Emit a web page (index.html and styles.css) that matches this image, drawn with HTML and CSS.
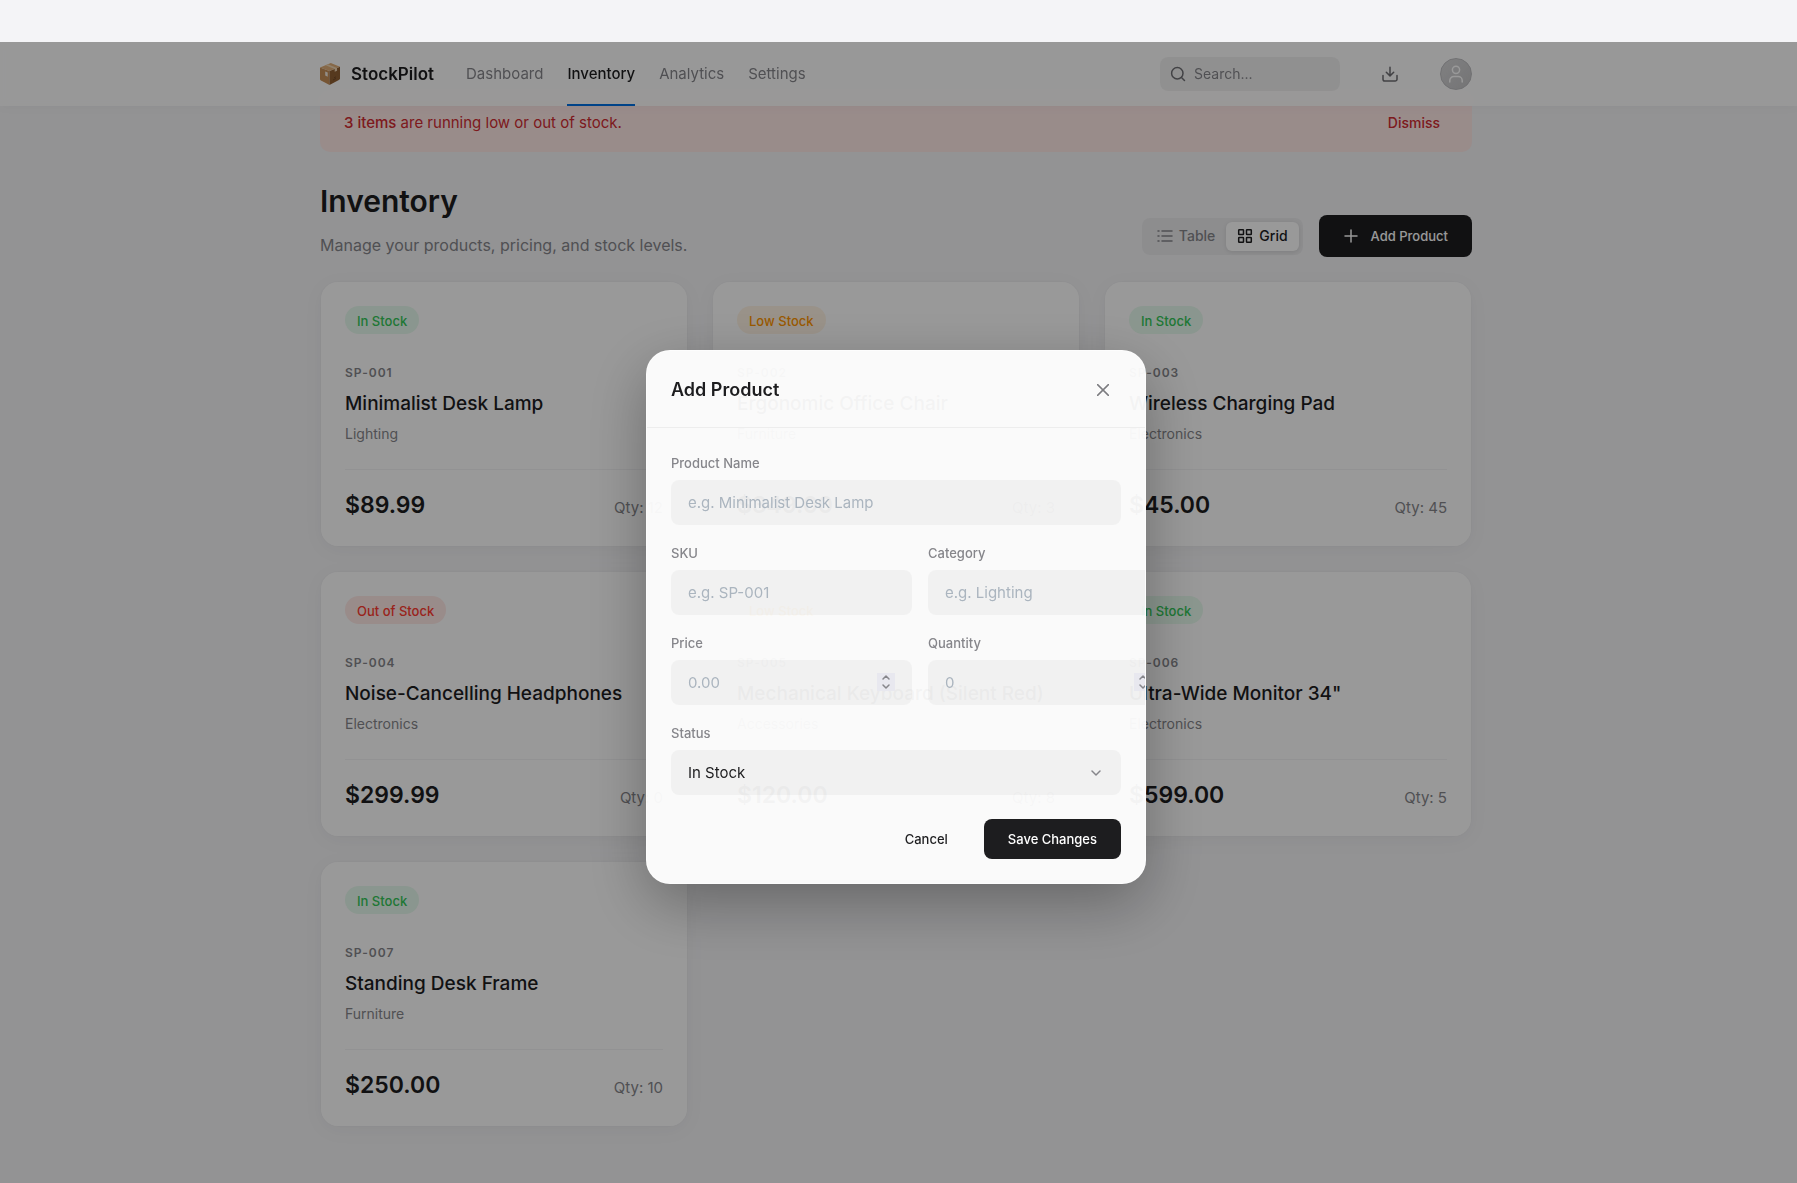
FILE: index.html
```html
<!DOCTYPE html>
<html lang="en">
<head>
<meta charset="utf-8">
<meta name="viewport" content="width=device-width, initial-scale=1">
<title>StockPilot – Inventory</title>
<link rel="stylesheet" href="styles.css">
</head>
<body>
<div class="app">
  <header class="topbar">
    <div class="container topbar-inner">
      <a class="brand" href="#">
        <svg class="brand-icon" viewBox="0 0 20 22" aria-hidden="true">
          <path d="M0 4.5 9.5 8v14L1 17.6Q0 17 0 16z" fill="#c58e58"/>
          <path d="M20 3.8 9.5 8v14l9.400-5.100q1.100-.6 1.100-1.600z" fill="#8f5f33"/>
          <path d="M0 4.500 10.800 0 20 3.800 9.500 8z" fill="#dfae78"/>
          <path d="m5.600 2.200 2.200-1L17 5l.1 2.800-2.400 1V6z" fill="#f0d6b4"/>
          <path d="m5.200 8.600 2.500 1v4.200l-2.500-1.300z" fill="#f3ece2"/>
          <path d="m13 17 3-1.600M14 14.800l2-1" stroke="#6b4423" stroke-width=".8"/>
        </svg>
        <span>StockPilot</span>
      </a>
      <nav class="nav">
        <a href="#">Dashboard</a>
        <a class="active" href="#">Inventory</a>
        <a href="#">Analytics</a>
        <a href="#">Settings</a>
      </nav>
      <div class="tools">
        <label class="search">
          <svg class="icon" viewBox="0 0 16 16" aria-hidden="true"><circle cx="7.300" cy="7.300" r="5.700"/><path d="m11.500 11.500 3 3"/></svg>
          <input type="search" placeholder="Search..." aria-label="Search">
        </label>
        <button class="icon-button" type="button" aria-label="Export">
          <svg class="icon" viewBox="0 0 16 16" aria-hidden="true"><path d="M8 1.200v8.600M4.300 6.200 8 9.900l3.700-3.700M1 9.600v3.600a1.800 1.800 0 0 0 1.800 1.800h10.400a1.800 1.800 0 0 0 1.800-1.800V9.600"/></svg>
        </button>
        <button class="avatar" type="button" aria-label="Account">
          <svg class="icon" viewBox="0 0 16 18" aria-hidden="true"><circle cx="8" cy="4.800" r="3.600"/><path d="M1.800 17v-1.500a4 4 0 0 1 4-4h4.400a4 4 0 0 1 4 4V17"/></svg>
        </button>
      </div>
    </div>
  </header>

  <main class="content">
    <div class="container">
      <div class="alert">
        <p><strong>3 items</strong> are running low or out of stock.</p>
        <button type="button">Dismiss</button>
      </div>

      <div class="page-head">
        <div>
          <h1>Inventory</h1>
          <p class="subtitle">Manage your products, pricing, and stock levels.</p>
        </div>
        <div class="actions">
          <div class="toggle">
            <button type="button">
              <svg class="icon" viewBox="0 0 16 16" aria-hidden="true"><path d="M5 3h10M5 8h10M5 13h10M1 3h1M1 8h1M1 13h1"/></svg>Table
            </button>
            <button class="on" type="button">
              <svg class="icon" viewBox="0 0 16 16" aria-hidden="true"><rect x="1.700" y="1.700" width="4.800" height="4.800" rx=".6"/><rect x="9.500" y="1.700" width="4.800" height="4.800" rx=".6"/><rect x="1.700" y="9.500" width="4.800" height="4.800" rx=".6"/><rect x="9.500" y="9.500" width="4.800" height="4.800" rx=".6"/></svg>Grid
            </button>
          </div>
          <button class="primary add" type="button">
            <svg class="icon" viewBox="0 0 16 16" aria-hidden="true"><path d="M8 2v12M2 8h12"/></svg>Add Product
          </button>
        </div>
      </div>

      <div class="grid">
        <article class="card">
          <span class="badge in">In Stock</span>
          <div class="sku">SP-001</div><h2>Minimalist Desk Lamp</h2><p class="category">Lighting</p>
          <div class="card-foot"><span class="price">$89.99</span><span class="qty">Qty: 12</span></div>
        </article>
        <article class="card">
          <span class="badge low">Low Stock</span>
          <div class="sku">SP-002</div><h2>Ergonomic Office Chair</h2><p class="category">Furniture</p>
          <div class="card-foot"><span class="price">$349.00</span><span class="qty">Qty: 3</span></div>
        </article>
        <article class="card">
          <span class="badge in">In Stock</span>
          <div class="sku">SP-003</div><h2>Wireless Charging Pad</h2><p class="category">Electronics</p>
          <div class="card-foot"><span class="price">$45.00</span><span class="qty">Qty: 45</span></div>
        </article>
        <article class="card">
          <span class="badge out">Out of Stock</span>
          <div class="sku">SP-004</div><h2>Noise-Cancelling Headphones</h2><p class="category">Electronics</p>
          <div class="card-foot"><span class="price">$299.99</span><span class="qty">Qty: 0</span></div>
        </article>
        <article class="card">
          <span class="badge low">Low Stock</span>
          <div class="sku">SP-005</div><h2>Mechanical Keyboard (Silent Red)</h2><p class="category">Accessories</p>
          <div class="card-foot"><span class="price">$120.00</span><span class="qty">Qty: 8</span></div>
        </article>
        <article class="card">
          <span class="badge in">In Stock</span>
          <div class="sku">SP-006</div><h2>Ultra-Wide Monitor 34"</h2><p class="category">Electronics</p>
          <div class="card-foot"><span class="price">$599.00</span><span class="qty">Qty: 5</span></div>
        </article>
        <article class="card">
          <span class="badge in">In Stock</span>
          <div class="sku">SP-007</div><h2>Standing Desk Frame</h2><p class="category">Furniture</p>
          <div class="card-foot"><span class="price">$250.00</span><span class="qty">Qty: 10</span></div>
        </article>
      </div>
    </div>
  </main>

  <div class="overlay">
    <div class="modal" role="dialog" aria-modal="true" aria-labelledby="modal-title">
      <div class="modal-head">
        <h2 id="modal-title">Add Product</h2>
        <button type="button" class="close" aria-label="Close">
          <svg class="icon" viewBox="0 0 12 12" aria-hidden="true"><path d="m.6.6 10.800 10.800M11.400.6.6 11.400"/></svg>
        </button>
      </div>
      <form class="form">
        <div class="field">
          <label for="name">Product Name</label>
          <input id="name" type="text" placeholder="e.g. Minimalist Desk Lamp">
        </div>
        <div class="pair">
          <div class="field">
            <label for="sku">SKU</label>
            <input id="sku" type="text" placeholder="e.g. SP-001">
          </div>
          <div class="field">
            <label for="category">Category</label>
            <input id="category" type="text" placeholder="e.g. Lighting">
          </div>
        </div>
        <div class="pair">
          <div class="field">
            <label for="price">Price</label>
            <input id="price" type="number" placeholder="0.00">
          </div>
          <div class="field">
            <label for="quantity">Quantity</label>
            <input id="quantity" type="number" placeholder="0">
          </div>
        </div>
        <div class="field">
          <label for="status">Status</label>
          <select id="status"><option>In Stock</option><option>Low Stock</option><option>Out of Stock</option></select>
        </div>
        <div class="form-actions">
          <button class="ghost" type="button">Cancel</button>
          <button class="primary" type="submit">Save Changes</button>
        </div>
      </form>
    </div>
  </div>
</div>
</body>
</html>
```
FILE: styles.css
```css
* { box-sizing: border-box; }

html { height: 100%; }

body {
  margin: 0;
  min-height: 100%;
  padding-top: 42px;
  display: flex;
  background: #f4f4f7;
  color: #1d1d1f;
  font-family: Inter, "Liberation Sans", sans-serif;
  font-size: 14px;
  line-height: 20px;
}

h1, h2, p { margin: 0; }
a { color: inherit; text-decoration: none; }
button, input, select { font: inherit; color: inherit; }
button { border: 0; background: none; padding: 0; display: flex; align-items: center; justify-content: center; }

.icon {
  width: 16px;
  height: 16px;
  flex: none;
  fill: none;
  stroke: currentColor;
  stroke-width: 1.500;
  stroke-linecap: round;
  stroke-linejoin: round;
}

.app {
  position: relative;
  flex: 1;
  min-width: 0;
  background: #f5f5f7;
  overflow: hidden;
}

.container { max-width: 1152px; margin: 0 auto; }

/* Top bar, laid over the scrolled content */
.topbar {
  position: absolute;
  inset: 0 0 auto;
  z-index: 2;
  height: 64px;
  padding: 0 5px 0 0;
  background: rgba(255, 255, 255, .88);
  -webkit-backdrop-filter: blur(4px);
  backdrop-filter: blur(4px);
  box-shadow: 0 4px 8px rgba(0, 0, 0, .02);
}
.topbar-inner { height: 100%; display: flex; align-items: center; }
.brand { display: flex; align-items: center; gap: 11px; margin-right: 32px; font-size: 17px; font-weight: 600; }
.brand-icon { width: 20px; height: 22px; }
.nav { align-self: stretch; display: flex; gap: 24px; color: #86868b; font-size: 15px; }
.nav a { display: flex; align-items: center; border-bottom: 2px solid transparent; border-top: 2px solid transparent; }
.nav .active { color: #1d1d1f; font-weight: 500; border-bottom-color: #0071e3; }
.tools { margin-left: auto; display: flex; align-items: center; gap: 34px; color: #6e6e73; }
.search {
  width: 180px;
  height: 34px;
  padding: 0 10px;
  display: flex;
  align-items: center;
  gap: 8px;
  border-radius: 8px;
  background: rgba(0, 0, 0, .05);
}
.search input { min-width: 0; width: 100%; padding: 0; border: 0; outline: 0; background: none; }
.search input::placeholder { color: #86868b; opacity: 1; }
.icon-button { width: 32px; height: 32px; }
.avatar {
  width: 32px;
  height: 32px;
  border-radius: 50%;
  border: 1px solid #bcbcbf;
  background: linear-gradient(135deg, #d6d6d8, #c2c2c4);
  color: #fff;
}
.avatar .icon { height: 18px; }

.content { padding: 50px 5px 40px 0; }

.alert {
  height: 60px;
  padding: 2px 32px 0 24px;
  display: flex;
  align-items: center;
  justify-content: space-between;
  border-radius: 10px;
  background: #ffe9e7;
  color: #d12c32;
  font-size: 15px;
}
.alert strong { font-weight: 500; }
.alert button { font-size: 14px; font-weight: 500; }

.page-head { display: flex; align-items: flex-end; justify-content: space-between; padding: 27px 0 24px; }
h1 { font-size: 30px; line-height: 44px; font-weight: 600; }
.subtitle { margin-top: 11px; font-size: 16px; line-height: 23px; color: #86868b; }
.actions { display: flex; align-items: center; gap: 16px; }
.toggle { display: flex; padding: 4px; border-radius: 8px; background: rgba(0, 0, 0, .04); color: #86868b; font-weight: 500; }
.toggle button { height: 29px; padding: 0 11px; gap: 6px; border-radius: 6px; }
.toggle .on { background: #fff; color: #1d1d1f; box-shadow: 0 1px 4px rgba(0, 0, 0, .1); }
.primary { background: #1d1d1f; color: #fff; border-radius: 8px; font-size: 13px; font-weight: 500; height: 40px; padding: 0 24px; }
.add { height: 42px; gap: 12px; }

.grid { display: grid; grid-template-columns: repeat(3, minmax(0, 1fr)); gap: 24px; }
.card {
  padding: 24px;
  border: 1px solid rgba(0, 0, 0, .01);
  border-radius: 18px;
  background: #fff;
  background-clip: padding-box;
  box-shadow: 0 4px 20px rgba(0, 0, 0, .04);
}
.badge { display: inline-block; height: 28px; padding: 1px 12px 0; border-radius: 14px; font-size: 13px; line-height: 28px; font-weight: 500; vertical-align: top; }
.in { background: #e7fbee; color: #34c759; }
.low { background: #fff4e5; color: #ff9500; }
.out { background: #ffe9e7; color: #ff3b30; }
.sku { margin-top: 30px; font-size: 12px; line-height: 18px; font-weight: 600; letter-spacing: 1px; color: #86868b; }
.card h2 { margin-top: 8px; font-size: 19px; line-height: 28px; font-weight: 500; }
.category { margin-top: 6px; color: #86868b; }
.card-foot {
  margin-top: 25px;
  padding-top: 19px;
  display: flex;
  align-items: baseline;
  justify-content: space-between;
  border-top: 1px solid #f3f3f5;
}
.price { font-size: 23px; line-height: 33px; font-weight: 600; }
.qty { color: #86868b; font-size: 15px; }

/* Dialog */
.overlay {
  position: fixed;
  inset: 42px 0 0;
  z-index: 3;
  padding: 9px 5px 0 0;
  display: flex;
  align-items: center;
  justify-content: center;
  background: rgba(0, 0, 0, .4);
}
.modal {
  width: 500px;
  max-width: 100%;
  overflow: hidden;
  border: 1px solid rgba(255, 255, 255, .5);
  border-radius: 24px;
  background: rgba(255, 255, 255, .95);
  box-shadow: 0 20px 60px rgba(0, 0, 0, .3);
}
.modal-head {
  height: 77px;
  padding: 1px 36px 0 24px;
  display: flex;
  align-items: center;
  justify-content: space-between;
  border-bottom: 1px solid rgba(0, 0, 0, .05);
}
.modal-head h2 { font-size: 18px; line-height: 24px; font-weight: 600; }
.close { color: #7c7c80; }
.close .icon { width: 12px; height: 12px; }
.form { padding: 27px 24px 24px; display: flex; flex-direction: column; gap: 20px; }
.field { display: flex; flex-direction: column; gap: 8px; }
.field label { font-size: 13px; line-height: 17px; font-weight: 500; color: #86868b; }
.field input, .field select {
  width: 100%;
  height: 45px;
  padding: 0 17px;
  border: 0;
  border-radius: 8px;
  background-color: rgba(0, 0, 0, .035);
  font-size: 15px;
}
.field input::placeholder { color: #abb5bf; opacity: 1; }
.pair { display: grid; grid-template-columns: 241px 241px; gap: 16px; }
.field select {
  appearance: none;
  background-image: url("data:image/svg+xml,%3Csvg xmlns='http://www.w3.org/2000/svg' width='10' height='6' fill='none' stroke='%2386868b' stroke-width='1.500' stroke-linecap='round' stroke-linejoin='round'%3E%3Cpath d='m1 1 4 4 4-4'/%3E%3C/svg%3E");
  background-repeat: no-repeat;
  background-position: right 20px center;
}
.field input::-webkit-inner-spin-button {
  appearance: none;
  -webkit-appearance: none;
  width: 18px;
  height: 18px;
  opacity: 1;
  background: #e8e8ef url("data:image/svg+xml,%3Csvg xmlns='http://www.w3.org/2000/svg' width='18' height='18' fill='none' stroke='%2386868b' stroke-width='1.500' stroke-linecap='round' stroke-linejoin='round'%3E%3Cpath d='m6 6 3-3 3 3M6 12l3 3 3-3'/%3E%3C/svg%3E");
}
.form-actions { display: flex; justify-content: flex-end; gap: 12px; padding-top: 4px; }
.ghost { padding: 0 24px; font-size: 13px; font-weight: 500; }
```
